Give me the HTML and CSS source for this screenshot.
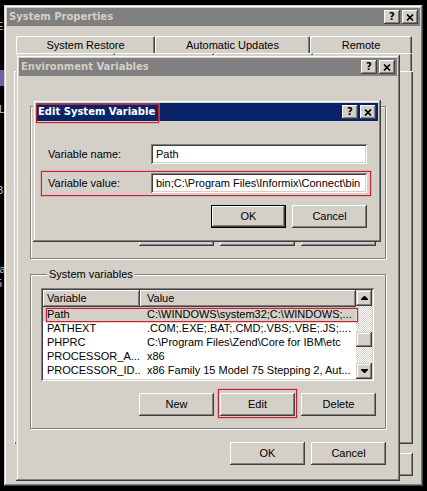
FILE: index.html
```html
<!DOCTYPE html>
<html>
<head>
<meta charset="utf-8">
<title>System Properties</title>
<link rel="stylesheet" href="styles.css">
</head>
<body>
<div class="desk">

  <span class="frag f-e">E</span>
  <span class="frag f-icon"></span>
  <span class="frag f-l">L</span>
  <span class="frag f-3">3</span>
  <span class="frag f-ia">ia</span>
  <span class="frag f-5">5</span>

  <section class="win sysprop">
    <header class="title inactive">
      <span class="ttext">System Properties</span>
      <div class="caps">
        <span class="cap">?</span>
        <span class="cap"><svg width="8" height="7" viewBox="0 0 8 7"><path d="M1 0.5L7 6.5M7 0.5L1 6.5" stroke="#000" stroke-width="1.7"/></svg></span>
      </div>
    </header>
    <div class="sp-body">
      <div class="tabrow back">
        <div class="tab t1">System Restore</div>
        <div class="tab t2">Automatic Updates</div>
        <div class="tab t3">Remote</div>
      </div>
      <div class="tabrow front">
        <div class="tab">General</div>
        <div class="tab">Computer Name</div>
        <div class="tab">Hardware</div>
        <div class="tab sel">Advanced</div>
      </div>
      <div class="panel"></div>
      <div class="btnrow sp-btns">
        <button class="btn">OK</button>
        <button class="btn">Cancel</button>
        <button class="btn">Apply</button>
      </div>
    </div>
  </section>

  <section class="win env">
    <header class="title inactive">
      <span class="ttext">Environment Variables</span>
      <div class="caps">
        <span class="cap">?</span>
        <span class="cap"><svg width="8" height="7" viewBox="0 0 8 7"><path d="M1 0.5L7 6.5M7 0.5L1 6.5" stroke="#000" stroke-width="1.7"/></svg></span>
      </div>
    </header>
    <div class="env-body">
      <fieldset class="group user">
        <legend>User variables for Administrator</legend>
        <div class="list ulist">
          <div class="list-body">
            <div class="lhead"><span>Variable</span><span>Value</span></div>
            <div class="lrow"><span>TEMP</span><span>C:\Documents and Settings\Administrator\Local...</span></div>
            <div class="lrow"><span>TMP</span><span>C:\Documents and Settings\Administrator\Local...</span></div>
          </div>
        </div>
        <div class="btnrow grp-btns">
          <button class="btn">New</button>
          <button class="btn">Edit</button>
          <button class="btn">Delete</button>
        </div>
      </fieldset>

      <fieldset class="group sys">
        <legend>System variables</legend>
        <div class="list slist">
          <div class="list-body">
            <div class="lhead"><span>Variable</span><span>Value</span></div>
            <div class="lrow sel"><span>Path</span><span>C:\WINDOWS\system32;C:\WINDOWS;...</span></div>
            <div class="lrow"><span>PATHEXT</span><span>.COM;.EXE;.BAT;.CMD;.VBS;.VBE;.JS;....</span></div>
            <div class="lrow"><span>PHPRC</span><span>C:\Program Files\Zend\Core for IBM\etc</span></div>
            <div class="lrow"><span>PROCESSOR_A...</span><span>x86</span></div>
            <div class="lrow"><span>PROCESSOR_ID...</span><span>x86 Family 15 Model 75 Stepping 2, Aut...</span></div>
          </div>
          <div class="vscroll">
            <span class="sb-btn"><svg width="7" height="4" viewBox="0 0 7 4"><path d="M3 0h1l3 3v1H0V3z"/></svg></span>
            <span class="sb-thumb"></span>
            <span class="sb-fill"></span>
            <span class="sb-btn"><svg width="7" height="4" viewBox="0 0 7 4"><path d="M0 0h7v1L4 4H3L0 1z"/></svg></span>
          </div>
        </div>
        <div class="btnrow grp-btns">
          <button class="btn">New</button>
          <button class="btn marked">Edit</button>
          <button class="btn">Delete</button>
        </div>
      </fieldset>

      <div class="btnrow env-btns">
        <button class="btn">OK</button>
        <button class="btn">Cancel</button>
      </div>
    </div>
  </section>

  <section class="win edit">
    <header class="title">
      <span class="ttext marked-title">Edit System Variable</span>
      <div class="caps">
        <span class="cap">?</span>
        <span class="cap"><svg width="8" height="7" viewBox="0 0 8 7"><path d="M1 0.5L7 6.5M7 0.5L1 6.5" stroke="#000" stroke-width="1.7"/></svg></span>
      </div>
    </header>
    <div class="ed-body">
      <div class="ed-row">
        <label class="lbl">Variable name:</label>
        <div class="field">Path</div>
      </div>
      <div class="ed-row marked-row">
        <label class="lbl">Variable value:</label>
        <div class="field">bin;C:\Program Files\Informix\Connect\bin</div>
      </div>
      <div class="btnrow ed-btns">
        <button class="btn default">OK</button>
        <button class="btn">Cancel</button>
      </div>
    </div>
  </section>

</div>
</body>
</html>
```

FILE: styles.css
```css
* { box-sizing: border-box; }
html, body { margin: 0; padding: 0; }
body {
  background: #000;
  width: 427px;
  height: 491px;
  overflow: hidden;
  font: 11px/13px "Liberation Sans", Arial, sans-serif;
  color: #000;
}
button {
  font: inherit;
  color: inherit;
  border: 0;
  margin: 0;
  padding: 0;
  appearance: none;
  background: none;
}
.desk { position: relative; width: 427px; height: 491px; overflow: hidden; }

/* desktop fragments peeking out at the left edge */
.frag {
  position: absolute;
  color: #c8c8c8;
  font: 11px/13px "Liberation Sans", Arial, sans-serif;
  white-space: nowrap;
}
.f-e { left: -4px; top: 20px; }
.f-icon { left: 0; top: 70px; width: 4px; height: 16px; background: #6a64a6; }
.f-l { left: -1px; top: 103px; }
.f-3 { left: -3px; top: 184px; }
.f-ia { left: -3px; top: 263px; }
.f-5 { left: -4px; top: 277px; }

/* windows */
.win {
  position: absolute;
  background: #d4d0c8;
  padding: 3px;
  display: flex;
  flex-direction: column;
  box-shadow: inset -1px -1px #404040, inset 1px 1px #d4d0c8,
              inset -2px -2px #808080, inset 2px 2px #fff;
}
.sysprop { left: 4px; top: 5px; width: 419px; height: 481px; }
.env { left: 16px; top: 55px; width: 384px; height: 426px; }
.edit { left: 33px; top: 100px; width: 348px; height: 142px; }

.title {
  flex: none;
  height: 18px;
  display: flex;
  align-items: center;
  justify-content: space-between;
  padding: 0 2px 0 2px;
  background: #0a246a;
  color: #fff;
  font: bold 10px/18px "DejaVu Sans", sans-serif;
  white-space: nowrap;
}
.title.inactive { background: #808080; color: #d4d0c8; }
.caps { display: flex; gap: 2px; }
.cap {
  width: 16px;
  height: 14px;
  background: #d4d0c8;
  color: #000;
  display: flex;
  align-items: center;
  justify-content: center;
  font: bold 10px/14px "DejaVu Sans", sans-serif;
  box-shadow: inset -1px -1px #404040, inset 1px 1px #fff,
              inset -2px -2px #808080, inset 2px 2px #d4d0c8;
}

/* buttons */
.btnrow { display: flex; justify-content: flex-end; gap: 6px; flex: none; }
.btn {
  width: 75px;
  height: 23px;
  background: #d4d0c8;
  display: flex;
  align-items: center;
  justify-content: center;
  box-shadow: inset -1px -1px #404040, inset 1px 1px #fff,
              inset -2px -2px #808080, inset 2px 2px #d4d0c8;
}
.btn.default {
  box-shadow: inset 0 0 0 1px #000, inset -2px -2px #404040,
              inset 2px 2px #fff, inset -3px -3px #808080;
}

/* system properties */
.sp-body {
  flex: 1;
  display: flex;
  flex-direction: column;
  padding: 10px 7px 7px 7px;
}
.tabrow { display: flex; margin: 0 1px 0 2px; flex: none; }
.tabrow.back { height: 17px; }
.tabrow.front { height: 18px; }
.tab {
  text-align: center;
  padding-top: 3px;
  border-radius: 2px 2px 0 0;
  box-shadow: inset 1px 1px #fff, inset -1px 0 #404040, inset -2px 0 #808080;
  white-space: nowrap;
  overflow: hidden;
}
.tabrow.front .tab { flex: 1; }
.t1 { width: 139px; }
.t2 { width: 155px; }
.t3 { width: 102px; }
.panel {
  flex: 1;
  box-shadow: inset 1px 1px #fff, inset -1px -1px #404040, inset -2px -2px #808080;
}
.sp-btns { margin-top: 9px; }

/* environment variables */
.env-body {
  flex: 1;
  display: flex;
  flex-direction: column;
  padding: 24px 11px 13px 11px;
}
.group {
  margin: 0;
  min-inline-size: 0;
  border: 1px solid #808080;
  box-shadow: inset 1px 1px #fff, 1px 1px #fff;
  padding: 7px 9px 12px 10px;
}
.group legend {
  padding: 0 2px;
  margin-left: 6px;
  line-height: 13px;
  background: #d4d0c8;
}
.group.sys { margin-top: 9px; }
.grp-btns { margin-top: 12px; }
.env-btns { margin-top: 13px; }

.list {
  width: 333px;
  background: #fff;
  display: flex;
  padding: 2px;
  box-shadow: inset 1px 1px #808080, inset -1px -1px #fff,
              inset 2px 2px #404040, inset -2px -2px #d4d0c8;
}
.ulist { height: 91px; }
.slist { height: 93px; }
.list-body { flex: 1; display: flex; flex-direction: column; min-width: 0; }
.lhead, .lrow { display: grid; grid-template-columns: 97px 1fr; white-space: nowrap; }
.lhead { height: 17px; }
.lhead span {
  background: #d4d0c8;
  line-height: 17px;
  padding-left: 4px;
  box-shadow: inset -1px -1px #404040, inset 1px 1px #fff, inset -2px -2px #808080;
}
.lhead span + span { padding-left: 7px; }
.lrow { height: 14px; line-height: 14px; }
.lrow span { padding-left: 4px; overflow: hidden; }
.lrow span + span { padding-left: 7px; }
.lrow.sel { background: #d4d0c8; position: relative; }
.lrow.sel::after {
  content: "";
  position: absolute;
  left: 3px;
  right: -2px;
  top: 1px;
  bottom: -1px;
  border: 1px solid #c8202c;
  box-shadow: 0 0 0 1px rgba(230, 140, 140, 0.45);
}

.vscroll {
  width: 16px;
  flex: none;
  display: flex;
  flex-direction: column;
  background-color: #fff;
  background-image: repeating-conic-gradient(#d4d0c8 0 25%, #fff 0 50%);
  background-size: 2px 2px;
}
.sb-btn, .sb-thumb {
  flex: none;
  background: #d4d0c8;
  box-shadow: inset -1px -1px #404040, inset 1px 1px #d4d0c8,
              inset -2px -2px #808080, inset 2px 2px #fff;
}
.sb-btn { height: 16px; display: flex; align-items: center; justify-content: center; }
.sb-thumb { height: 15px; margin-top: 26px; }
.sb-fill { flex: 1; }

.btn.marked { position: relative; }
.btn.marked::after {
  content: "";
  position: absolute;
  left: -2px;
  right: -2px;
  top: -4px;
  bottom: -2px;
  border: 1px solid #c8202c;
  box-shadow: 0 0 0 1px rgba(230, 140, 140, 0.45);
}

/* edit system variable */
.ed-body {
  flex: 1;
  display: flex;
  flex-direction: column;
  gap: 9px;
  padding: 23px 11px 11px 12px;
}
.ed-row {
  display: grid;
  grid-template-columns: 103px 216px;
  align-items: center;
  height: 20px;
}
.field {
  height: 20px;
  background: #fff;
  padding: 0 3px 0 5px;
  display: flex;
  align-items: center;
  white-space: nowrap;
  overflow: hidden;
  box-shadow: inset 1px 1px #808080, inset -1px -1px #fff,
              inset 2px 2px #404040, inset -2px -2px #d4d0c8;
}
.marked-row { position: relative; }
.marked-row::after {
  content: "";
  position: absolute;
  left: -7px;
  right: -4px;
  top: -2px;
  bottom: -3px;
  border: 1px solid #c8202c;
  box-shadow: 0 0 0 1px rgba(230, 140, 140, 0.45);
}
.marked-title { position: relative; }
.marked-title::after {
  content: "";
  position: absolute;
  left: -2px;
  right: -4px;
  top: 1px;
  bottom: -2px;
  border: 1px solid #c8202c;
  box-shadow: 0 0 0 1px rgba(230, 140, 140, 0.45);
}
.ed-btns { margin-top: 3px; }
```
